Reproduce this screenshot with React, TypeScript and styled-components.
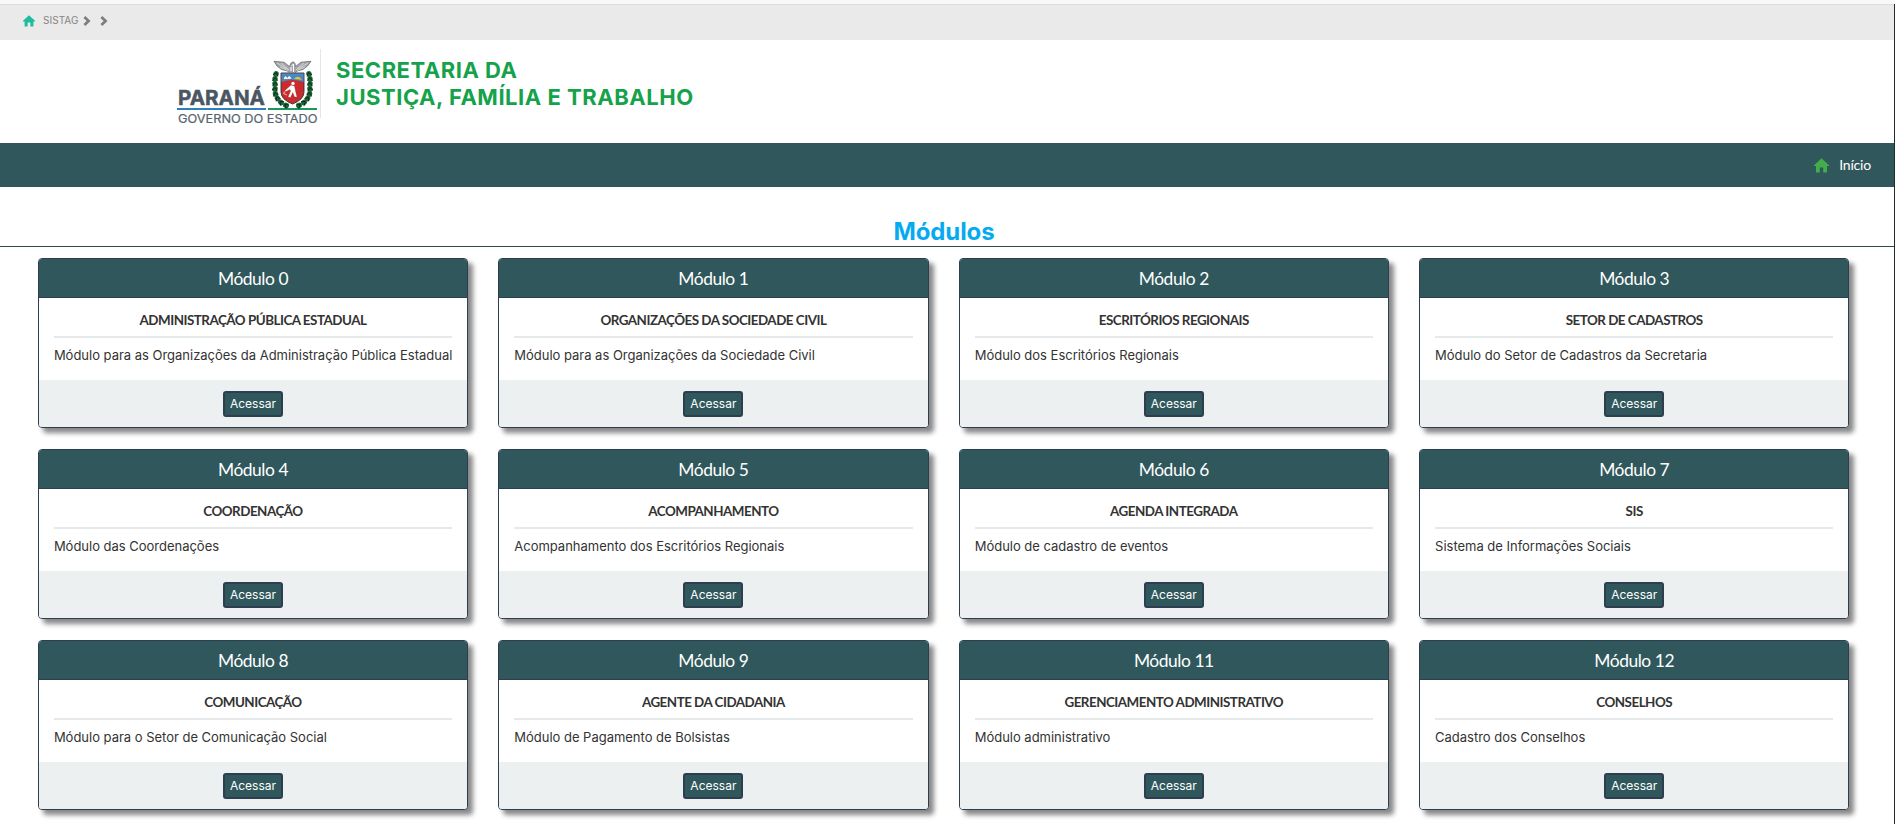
import React from 'react';
import styled, { createGlobalStyle } from 'styled-components';

const TEAL = '#30585c';
const NAVY = '#2c3e50';

const GlobalStyle = createGlobalStyle`
  *, *::before, *::after { box-sizing: border-box; }
  html, body { margin: 0; padding: 0; background: #fff; overflow: hidden; }
  body { font-family: Inter, 'Liberation Sans', sans-serif; color: #333; }
`;

const Page = styled.div`
  height: 824px;
  overflow: hidden;
`;

const TopStrip = styled.div`
  height: 4px;
  background: #f8f8f8;
`;

const Frame = styled.div`
  height: 820px;
  border-right: 1px solid #1f2d2f;
`;

const Breadcrumb = styled.nav`
  display: flex;
  align-items: center;
  height: 36px;
  padding: 0 0 4px 23px;
  background: #eaeaea;
  border-top: 1px solid #dedede;
  color: #848484;
  font-size: 10px;
  line-height: 12px;
`;

const Crumb = styled.span`
  margin: 0 5px 1px 8px;
  letter-spacing: 0.05px;
`;

const ChevronSvg = styled.svg`
  width: 8px;
  height: 10px;
  margin-right: 9px;
`;

const HomeSvg = styled.svg<{ $size: number }>`
  width: ${(p) => p.$size}px;
  height: ${(p) => p.$size}px;
  flex: none;
`;

const Header = styled.header`
  display: flex;
  height: 103px;
  padding: 9px 0 0 174px;
`;

const LogoBox = styled.div`
  width: 147px;
  height: 69px;
  border-right: 1px solid #e6e6e6;
`;

const Agency = styled.h1`
  margin: 8px 0 0 15px;
  color: #15a24a;
  font-size: 22px;
  font-weight: 700;
  line-height: 27px;
  letter-spacing: 0.53px;
`;

const NavBar = styled.nav`
  display: flex;
  justify-content: flex-end;
  align-items: center;
  height: 44px;
  padding-right: 23px;
  background: ${TEAL};
`;

const NavLink = styled.a`
  display: flex;
  align-items: center;
  gap: 10px;
  color: #fff;
  font: 400 14px/20px Lato, sans-serif;
  letter-spacing: -0.2px;
`;

const SectionTitle = styled.h2`
  height: 60px;
  margin: 0;
  padding: 30px 6px 0 0;
  border-bottom: 1px solid #2b4a4c;
  color: #05abf0;
  text-align: center;
  font-size: 24px;
  font-weight: 700;
  line-height: 30px;
  letter-spacing: -0.1px;
`;

const Grid = styled.main`
  display: grid;
  grid-template-columns: repeat(4, minmax(0, 1fr));
  gap: 21px 30.2px;
  padding: 11px 44.7px 0 37.9px;
`;

const Card = styled.article`
  height: 170px;
  border: 1px solid ${NAVY};
  border-radius: 4px;
  background: #fff;
  box-shadow: 5px 5px 5px #888;
`;

const CardHeader = styled.h3`
  height: 39px;
  margin: 0;
  padding-top: 9px;
  border-bottom: 1px solid ${NAVY};
  border-radius: 3px 3px 0 0;
  background: ${TEAL};
  color: #fff;
  text-align: center;
  font: 400 17.4px/22px Lato, sans-serif;
  letter-spacing: -0.45px;
`;

const CardBody = styled.div`
  height: 82px;
  padding: 12px 15px 0;
`;

const CardTitle = styled.h4`
  height: 28px;
  margin: 0;
  border-bottom: 2px solid #e6e9ea;
  color: #333;
  text-align: center;
  font: 700 13.4px/20px Lato, sans-serif;
  letter-spacing: -0.5px;
`;

const Description = styled.p`
  margin: 8px 0 0;
  font-size: 13px;
  line-height: 18px;
  letter-spacing: -0.015px;
  white-space: nowrap;
`;

const CardFooter = styled.footer`
  display: flex;
  justify-content: center;
  height: 47px;
  padding-top: 11px;
  border-radius: 0 0 3px 3px;
  background: #ecf0f1;
`;

const Button = styled.button`
  width: 60px;
  height: 26px;
  padding: 0;
  border: 2px solid ${NAVY};
  border-radius: 3px;
  background: ${TEAL};
  color: #fff;
  font: 400 12px/20px Inter, sans-serif;
`;

const MODULES: [string, string, string][] = [
  ['Módulo 0', 'ADMINISTRAÇÃO PÚBLICA ESTADUAL', 'Módulo para as Organizações da Administração Pública Estadual'],
  ['Módulo 1', 'ORGANIZAÇÕES DA SOCIEDADE CIVIL', 'Módulo para as Organizações da Sociedade Civil'],
  ['Módulo 2', 'ESCRITÓRIOS REGIONAIS', 'Módulo dos Escritórios Regionais'],
  ['Módulo 3', 'SETOR DE CADASTROS', 'Módulo do Setor de Cadastros da Secretaria'],
  ['Módulo 4', 'COORDENAÇÃO', 'Módulo das Coordenações'],
  ['Módulo 5', 'ACOMPANHAMENTO', 'Acompanhamento dos Escritórios Regionais'],
  ['Módulo 6', 'AGENDA INTEGRADA', 'Módulo de cadastro de eventos'],
  ['Módulo 7', 'SIS', 'Sistema de Informações Sociais'],
  ['Módulo 8', 'COMUNICAÇÃO', 'Módulo para o Setor de Comunicação Social'],
  ['Módulo 9', 'AGENTE DA CIDADANIA', 'Módulo de Pagamento de Bolsistas'],
  ['Módulo 11', 'GERENCIAMENTO ADMINISTRATIVO', 'Módulo administrativo'],
  ['Módulo 12', 'CONSELHOS', 'Cadastro dos Conselhos'],
];

const HomeIcon = ({ size, color }: { size: number; color: string }) => (
  <HomeSvg $size={size} viewBox="0 0 15 15" fill={color}>
    <path d="M7.5 0.3 L15 7.3 V8 H13 V14.5 H9.2 V9.5 H5.8 V14.5 H2 V8 H0 V7.3 Z" />
  </HomeSvg>
);

const Chevron = () => (
  <ChevronSvg viewBox="0 0 8 10">
    <path d="M1.4 1 L5.6 5 L1.4 9" fill="none" stroke="#7d7d7d" strokeWidth="2.7" />
  </ChevronSvg>
);

const LEAVES: [number, number, number][] = [
  [102, 25, 20], [101, 30, 0], [101, 35, -10], [101, 40, 15], [101.5, 45, -15], [103.5, 49.5, -30], [107, 53.5, -50], [112, 56.5, -60],
];

const LaurelSide = () => (
  <g>
    {LEAVES.map(([x, y, r]) => (
      <g key={y} transform={`translate(${x} ${y}) rotate(${r})`}>
        <ellipse rx="2.7" ry="3" fill="#176434" />
        <path d="M-2.6 1.8 L0 -1.5 L2.6 1.6" fill="none" stroke="#14291c" strokeWidth="0.9" />
      </g>
    ))}
  </g>
);

const ParanaLogo = () => (
  <svg width="146" height="78" viewBox="0 0 146 78">
    <text x="4" y="56" fill="#4b5663" stroke="#4b5663" strokeWidth="0.5" fontFamily="Inter, sans-serif" fontSize="20.5" fontWeight="700" textLength="87" lengthAdjust="spacingAndGlyphs">PARANÁ</text>
    <rect x="3" y="59" width="89" height="2" fill="#2e7fba" />
    <rect x="94" y="59" width="49" height="2" fill="#18985a" />
    <text x="4" y="73.7" fill="#596370" stroke="#596370" strokeWidth="0.2" fontFamily="Inter, sans-serif" fontSize="12" textLength="139.5" lengthAdjust="spacingAndGlyphs">GOVERNO DO ESTADO</text>
    <LaurelSide />
    <g transform="translate(237 0) scale(-1 1)"><LaurelSide /></g>
    <path d="M107 24 H130 V43 Q130 50.5 118.5 55 Q107 50.5 107 43 Z" fill="#cb2b2d" stroke="#30343a" strokeWidth="0.9" />
    <path d="M107.5 24.5 H129.5 V33 Q118.5 29 107.5 33 Z" fill="#3f8ccd" />
    <path d="M109 30.5 L111 26.5 L113.5 28.5 L115 26.5 L117 28 L118 30 Z" fill="#fff" stroke="#333" strokeWidth="0.4" />
    <path d="M120 30 Q124 25 128 30.8 Z" fill="#f5bb28" />
    <circle cx="119" cy="34.4" r="1.7" fill="#fff" />
    <path d="M117 36 L120.5 37 L121.5 42 L123 48 L120.5 48 L118.8 43.5 L116.5 48.5 L114 48 L116.6 42 L116 40.5 L112 42.5 L111.5 41 Z" fill="#fff" stroke="#7b2a2a" strokeWidth="0.3" />
    <path d="M112 41 L109.5 44.5 L113 46" fill="none" stroke="#f2dada" strokeWidth="0.8" />
    <path d="M100 12.3 L110 13.2 L115.5 17.5 L117 14 L119.5 12.8 L121 14.5 L121.5 17.5 L127 13.2 L137 12.3 L133.5 17 L129 20.5 L123 22 L121 24 H115.5 L113.5 22 L107.5 20.5 L103 17 Z" fill="#a4a6aa" stroke="#5c6066" strokeWidth="0.7" />
    <path d="M103 14 L113 20 M107 14 L115 21 M106 18 L114 21.5 M134 14 L124 20 M130 14 L122 21 M131 18 L123 21.5" stroke="#e7e8ea" strokeWidth="0.7" />
    <path d="M117.5 17 L119.5 15 V23 M117 18 V22" fill="none" stroke="#fff" strokeWidth="1" />
  </svg>
);

export default function App() {
  return (
    <Page>
      <GlobalStyle />
      <TopStrip />
      <Frame>
        <Breadcrumb>
          <HomeIcon size={12} color="#1cbc9c" />
          <Crumb>SISTAG</Crumb>
          <Chevron />
          <Chevron />
        </Breadcrumb>
        <Header>
          <LogoBox><ParanaLogo /></LogoBox>
          <Agency>SECRETARIA DA<br />JUSTIÇA, FAMÍLIA E TRABALHO</Agency>
        </Header>
        <NavBar>
          <NavLink>
            <HomeIcon size={15} color="#43ac4b" />
            Início
          </NavLink>
        </NavBar>
        <SectionTitle>Módulos</SectionTitle>
        <Grid>
          {MODULES.map(([name, title, description]) => (
            <Card key={name}>
              <CardHeader>{name}</CardHeader>
              <CardBody>
                <CardTitle>{title}</CardTitle>
                <Description>{description}</Description>
              </CardBody>
              <CardFooter><Button>Acessar</Button></CardFooter>
            </Card>
          ))}
        </Grid>
      </Frame>
    </Page>
  );
}
